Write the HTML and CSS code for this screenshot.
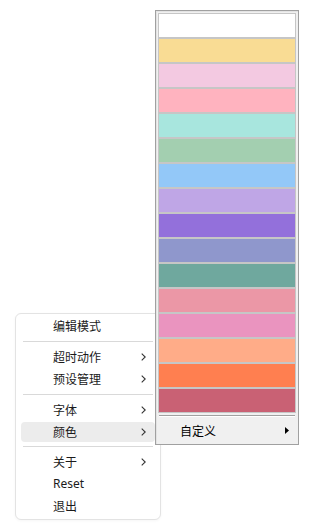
FILE: index.html
```html
<!DOCTYPE html>
<html>
<head>
<meta charset="utf-8">
<link rel="stylesheet" href="styles.css">
</head>
<body>
<div class="menu">
  <div class="item"><span class="label">编辑模式</span></div>
  <div class="sep"></div>
  <div class="item"><span class="label">超时动作</span><svg class="chev" width="5" height="8" viewBox="0 0 5 8"><path d="M0.7 0.6 L4.2 4 L0.7 7.4" fill="none" stroke="#333" stroke-width="1.1"/></svg></div>
  <div class="item"><span class="label">预设管理</span><svg class="chev" width="5" height="8" viewBox="0 0 5 8"><path d="M0.7 0.6 L4.2 4 L0.7 7.4" fill="none" stroke="#333" stroke-width="1.1"/></svg></div>
  <div class="sep"></div>
  <div class="item"><span class="label">字体</span><svg class="chev" width="5" height="8" viewBox="0 0 5 8"><path d="M0.7 0.6 L4.2 4 L0.7 7.4" fill="none" stroke="#333" stroke-width="1.1"/></svg></div>
  <div class="item active"><span class="label">颜色</span><svg class="chev" width="5" height="8" viewBox="0 0 5 8"><path d="M0.7 0.6 L4.2 4 L0.7 7.4" fill="none" stroke="#333" stroke-width="1.1"/></svg></div>
  <div class="sep"></div>
  <div class="item"><span class="label">关于</span><svg class="chev" width="5" height="8" viewBox="0 0 5 8"><path d="M0.7 0.6 L4.2 4 L0.7 7.4" fill="none" stroke="#333" stroke-width="1.1"/></svg></div>
  <div class="item"><span class="label latin">Reset</span></div>
  <div class="item"><span class="label">退出</span></div>
</div>

<div class="submenu">
  <div class="swatches">
    <div class="swatch" style="background:#ffffff"></div>
    <div class="swatch" style="background:#f9dc94"></div>
    <div class="swatch" style="background:#f3c9e1"></div>
    <div class="swatch" style="background:#ffb3bf"></div>
    <div class="swatch" style="background:#a8e6de"></div>
    <div class="swatch" style="background:#a3cfb0"></div>
    <div class="swatch" style="background:#93c8f8"></div>
    <div class="swatch" style="background:#bfa6e6"></div>
    <div class="swatch" style="background:#9370db"></div>
    <div class="swatch" style="background:#8f97cc"></div>
    <div class="swatch" style="background:#6fa89e"></div>
    <div class="swatch" style="background:#eb97a6"></div>
    <div class="swatch" style="background:#ea94bf"></div>
    <div class="swatch" style="background:#ffac88"></div>
    <div class="swatch" style="background:#ff7f50"></div>
    <div class="swatch" style="background:#c96174"></div>
  </div>
  <div class="subsep"></div>
  <div class="subitem"><span class="label">自定义</span><svg class="tri" width="4" height="7" viewBox="0 0 4 7"><path d="M0 0 L4 3.5 L0 7 Z" fill="#000"/></svg></div>
</div>
</body>
</html>
```

FILE: styles.css
```css
html, body {
  margin: 0;
  padding: 0;
  background: #ffffff;
}

body {
  width: 315px;
  height: 528px;
  position: relative;
  overflow: hidden;
  font-family: "Noto Sans CJK SC", "Noto Sans", sans-serif;
  font-size: 12px;
  color: #1b1b1b;
}

.menu {
  position: absolute;
  left: 15px;
  top: 313px;
  width: 144px;
  padding: 1px 0 2px;
  background: #ffffff;
  border: 1px solid #e3e3e3;
  border-radius: 6px;
  box-shadow: 0 1px 3px rgba(0, 0, 0, 0.04);
}

.item {
  height: 22px;
  margin: 0 5px;
  padding: 0 9px 0 32px;
  display: flex;
  align-items: center;
  justify-content: space-between;
  border-radius: 4px;
  line-height: 22px;
}

.item .latin {
  font-family: "Noto Sans", "Noto Sans CJK SC", sans-serif;
}

.item.active {
  background: #ececec;
  height: 20px;
  margin-top: 1px;
  margin-bottom: 1px;
}

.chev {
  display: block;
}

.sep {
  height: 1px;
  margin: 4px 7px;
  background: #d9d9d9;
}

.submenu {
  position: absolute;
  left: 155px;
  top: 10px;
  width: 142px;
  padding: 2px 0 0;
  background: #f0f0f0;
  border: 1px solid #a0a0a0;
  box-shadow: inset 1px 1px 0 #e3e3e3;
}

.swatches {
  display: flex;
  flex-direction: column;
  padding: 0 2px;
}

.swatch {
  height: 23px;
  border: 1px solid #c6c6c6;
}

.subsep {
  height: 1px;
  margin: 2px 3px 0;
  background: #a0a0a0;
  border-bottom: 1px solid #ffffff;
}

.subitem {
  height: 27px;
  padding: 0 9px 0 24px;
  display: flex;
  align-items: center;
  justify-content: space-between;
  color: #000;
}

.tri {
  display: block;
}
```
